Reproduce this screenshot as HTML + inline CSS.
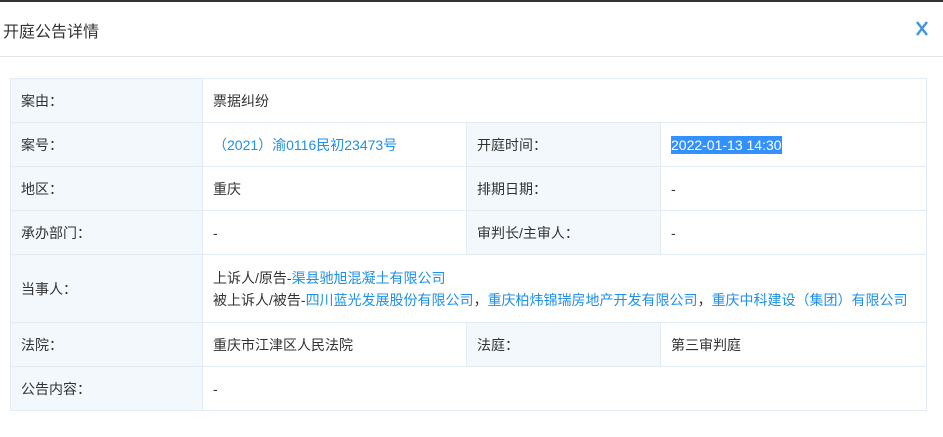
<!DOCTYPE html><html><head><meta charset="utf-8"><style>
body{margin:0;width:943px;height:437px;background:#fff;font-family:"Liberation Sans","Noto Sans CJK SC",sans-serif;color:#333;font-size:14px;position:relative;overflow:hidden}
.top{position:absolute;left:0;top:0;width:943px;height:2px;background:#333}
.hd{position:absolute;left:0;top:2px;width:943px;height:54px;border-bottom:1px solid #e4e4e4}
.tt{position:absolute;left:3px;top:16px;font-size:16px;color:#333}
.x{position:absolute;left:915px;top:19px}
table{position:absolute;left:10px;top:78px;width:917px;border-collapse:collapse}
td{border:1px solid #e3ecf4;padding:0 0 0 10px;height:43px;vertical-align:middle}
td.l{background:#f2f8fc}
a{color:#1e90e6;text-decoration:none}
.sel{background:#3390ff;color:#fff;padding:1px 0}
</style></head><body>
<div class="top"></div>
<div class="hd"><div class="tt">开庭公告详情</div>
<svg class="x" width="14" height="15" viewBox="0 0 14 15"><path d="M2 1L12 14M12 1L2 14" stroke="#3d96e0" stroke-width="2.4"/></svg></div>
<table>
<colgroup><col style="width:192px"><col style="width:264px"><col style="width:194px"><col></colgroup>
<tr><td class="l">案由：</td><td colspan="3">票据纠纷</td></tr>
<tr><td class="l">案号：</td><td><a>（2021）渝0116民初23473号</a></td><td class="l">开庭时间：</td><td><span class="sel">2022-01-13 14:30</span></td></tr>
<tr><td class="l">地区：</td><td>重庆</td><td class="l">排期日期：</td><td>-</td></tr>
<tr><td class="l">承办部门：</td><td>-</td><td class="l">审判长/主审人：</td><td>-</td></tr>
<tr><td class="l" style="height:67px">当事人：</td><td colspan="3" style="line-height:22px">上诉人/原告-<a>渠县驰旭混凝土有限公司</a><br>被上诉人/被告-<a>四川蓝光发展股份有限公司</a>，<a>重庆柏炜锦瑞房地产开发有限公司</a>，<a>重庆中科建设（集团）有限公司</a></td></tr>
<tr><td class="l">法院：</td><td>重庆市江津区人民法院</td><td class="l">法庭：</td><td>第三审判庭</td></tr>
<tr><td class="l">公告内容：</td><td colspan="3">-</td></tr>
</table>
</body></html>
